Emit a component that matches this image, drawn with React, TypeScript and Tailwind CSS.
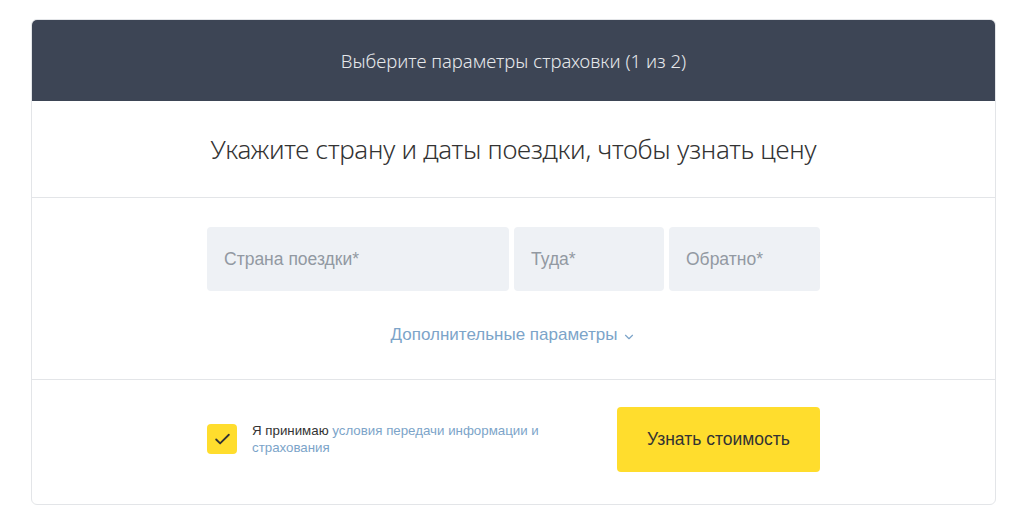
import { Check, ChevronDown } from 'lucide-react';

export default function App() {
  return (
    <div className="min-h-screen bg-white pt-[19px] px-[31px] pr-[28px]" style={{ fontFamily: '"Liberation Sans", Arial, sans-serif' }}>
      <div className="rounded-[6px] border border-[#e3e5e8] overflow-hidden w-[965px]">
        <div className="h-[81px] bg-[#3d4555] flex items-center justify-center">
          <span className="text-[18.5px] text-[#e6e8eb] font-light" style={{ fontFamily: '"Noto Sans", sans-serif' }}>
            Выберите параметры страховки (1 из 2)
          </span>
        </div>

        <div className="h-[97px] border-b border-[#e3e5e8] flex items-center justify-center">
          <h1 className="text-[26px] text-[#333333] font-light tracking-[-0.3px]" style={{ fontFamily: '"Noto Sans", sans-serif' }}>
            Укажите страну и даты поездки, чтобы узнать цену
          </h1>
        </div>

        <div className="h-[182px] border-b border-[#e3e5e8] flex flex-col items-center pt-[29px]">
          <div className="flex gap-[5px]">
            <div className="w-[302px] h-[64px] rounded-[4px] bg-[#eef1f5] flex items-center px-[17px] text-[17.5px] text-[#9299a2]">
              Страна поездки*
            </div>
            <div className="w-[150px] h-[64px] rounded-[4px] bg-[#eef1f5] flex items-center px-[17px] text-[17.5px] text-[#9299a2]">
              Туда*
            </div>
            <div className="w-[151px] h-[64px] rounded-[4px] bg-[#eef1f5] flex items-center px-[17px] text-[17.5px] text-[#9299a2]">
              Обратно*
            </div>
          </div>
          <div className="mt-[31px] flex items-center gap-[5px] text-[17px] text-[#7ca4c9]">
            <span>Дополнительные параметры</span>
            <ChevronDown size={14} strokeWidth={2} className="mt-[4px]" />
          </div>
        </div>

        <div className="h-[124px] flex items-center pl-[175px] pb-[6px]">
          <div className="flex items-center w-[410px]">
            <div className="w-[30px] h-[30px] rounded-[4px] bg-[#ffdd2d] flex items-center justify-center shrink-0">
              <Check size={19} strokeWidth={2.3} className="text-[#333333]" />
            </div>
            <div className="ml-[15px] text-[13.3px] leading-[17px] flex flex-col">
              <div>
                <span className="text-[#333333]">Я принимаю </span>
                <span className="text-[#7ca4c9]">условия передачи информации и</span>
              </div>
              <span className="text-[#7ca4c9]">страхования</span>
            </div>
          </div>
          <button className="w-[203px] h-[65px] rounded-[4px] bg-[#ffdd2d] text-[17.5px] text-[#333333]">
            Узнать стоимость
          </button>
        </div>
      </div>
    </div>
  );
}
